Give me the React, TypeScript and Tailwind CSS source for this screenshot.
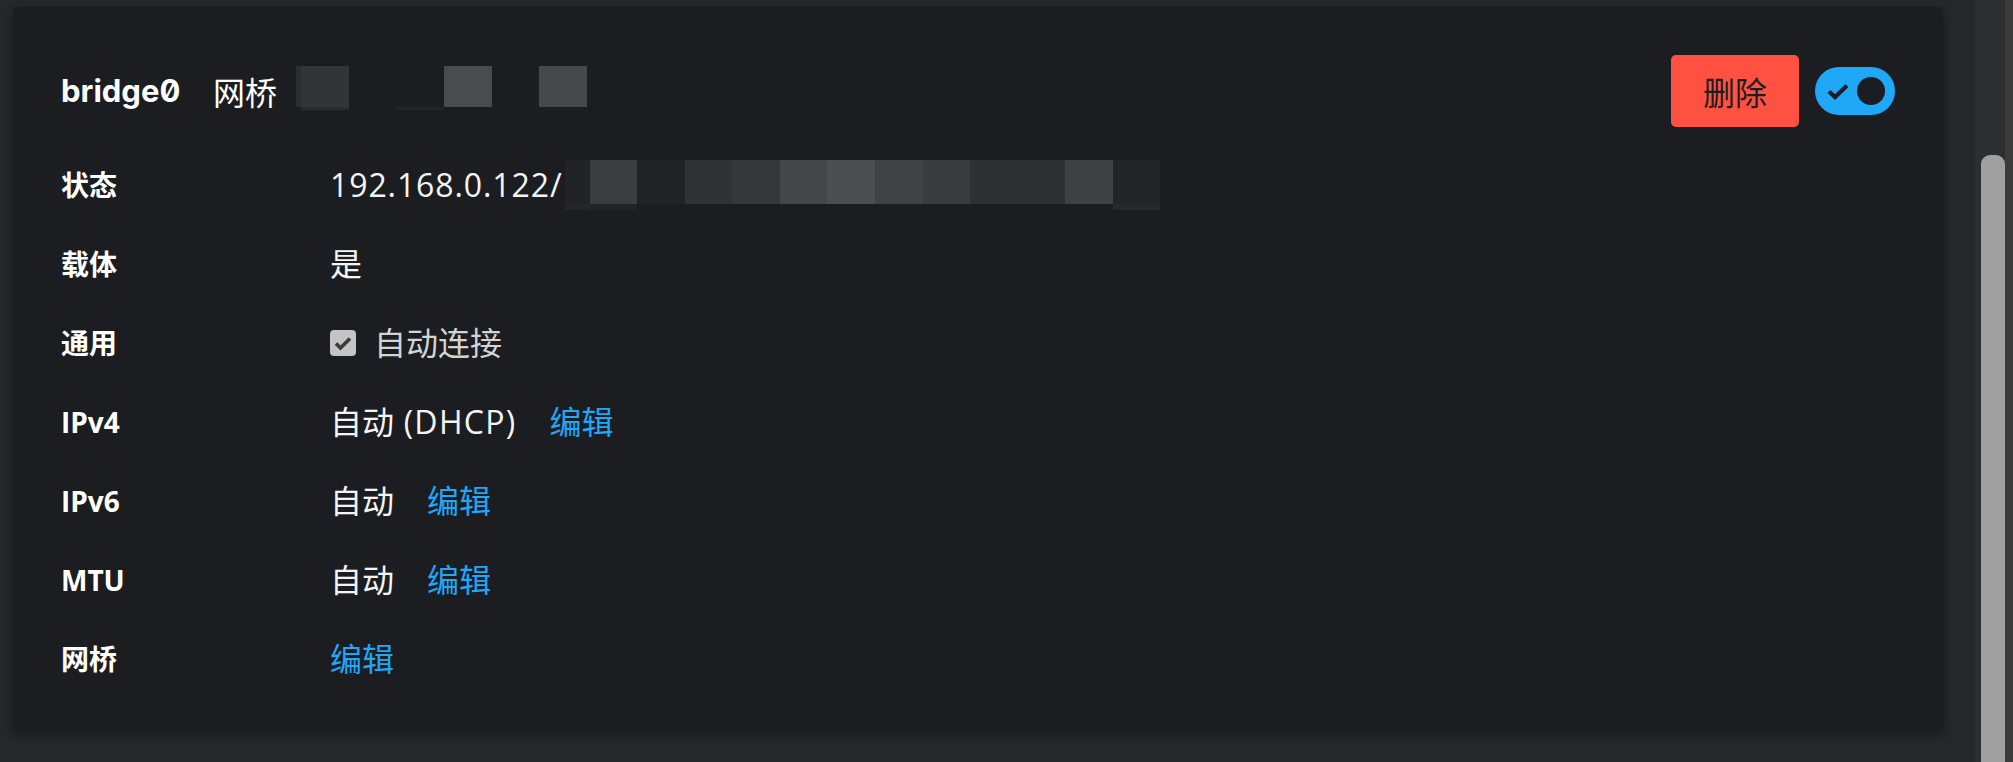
import React from "react";

const valueFont = "[font-family:'Open_Sans','Noto_Sans_CJK_SC',sans-serif]";

function HeadMosaic() {
  return (
    <svg width="291" height="44" viewBox="0 0 291 44" className="mb-[6px] ml-[19px] shrink-0">
      <rect x="0" y="0" width="5" height="41" fill="#2c2d31" />
      <rect x="5" y="0" width="48" height="41" fill="#333438" />
      <rect x="5" y="41" width="48" height="3" fill="#2a2b2f" />
      <rect x="100" y="41" width="48" height="3" fill="#232429" />
      <rect x="148" y="0" width="48" height="41" fill="#4a4b4f" />
      <rect x="243" y="0" width="48" height="41" fill="#47484c" />
    </svg>
  );
}

function StatusMosaic() {
  const cells: [number, number, string][] = [
    [0, 25, "#222327"],
    [25, 47, "#3b3c40"],
    [72, 48, "#212226"],
    [120, 47, "#313236"],
    [167, 48, "#36373b"],
    [215, 47, "#45464a"],
    [262, 48, "#4d4e52"],
    [310, 48, "#414246"],
    [358, 47, "#3a3b3f"],
    [405, 95, "#2f3034"],
    [500, 48, "#404145"],
    [548, 47, "#232428"],
  ];
  return (
    <svg width="595" height="50" viewBox="0 0 595 50" className="ml-[2px] -my-[1px] shrink-0">
      {cells.map(([x, w, c]) => (
        <rect key={x} x={x} y="0" width={w} height="44" fill={c} />
      ))}
      <rect x="0" y="44" width="25" height="6" fill="#252629" />
      <rect x="25" y="44" width="47" height="6" fill="#222327" />
      <rect x="548" y="44" width="47" height="6" fill="#27282c" />
    </svg>
  );
}

function Label({ children }: { children: React.ReactNode }) {
  return (
    <div className="text-[28px] leading-[48px] font-bold text-white [font-family:'Open_Sans','Noto_Sans_CJK_SC',sans-serif]">
      {children}
    </div>
  );
}

function Value({ children }: { children: React.ReactNode }) {
  return (
    <div className={`flex items-center text-[32px] leading-[48px] text-[#f4f4f4] ${valueFont}`}>
      {children}
    </div>
  );
}

function Edit({ className = "" }: { className?: string }) {
  return <span className={`text-[#1fa7f8] ${className}`}>编辑</span>;
}

export default function App() {
  return (
    <div className="w-[2013px] h-[762px] overflow-hidden bg-[#26292c] flex">
      <div className="flex-1 pt-[7px] pl-[13px] pr-[32px]">
        <div className="bg-[#1b1d21] rounded-[3px] shadow-[0_4px_14px_rgba(0,0,0,0.45)] pt-[48px] pb-[47px] pl-[48px] pr-[48px]">
          {/* heading */}
          <div className="flex items-center justify-between h-[72px]">
            <div className="flex items-center">
              <span className="inline-block w-[119px] whitespace-nowrap text-[31px] leading-[48px] font-bold text-white [font-family:'Inter',sans-serif] [font-feature-settings:'zero'_1]">
                bridge0
              </span>
              <span className="ml-[33px] text-[32px] leading-[48px] text-white [font-family:'Noto_Sans_CJK_SC',sans-serif]">
                网桥
              </span>
              <HeadMosaic />
            </div>
            <div className="flex items-center gap-[16px]">
              <button className="w-[128px] h-[72px] rounded-[5px] bg-[#fe5142] text-[#1b1d21] text-[32px] leading-none [font-family:'Noto_Sans_CJK_SC',sans-serif] flex items-center justify-center">
                删除
              </button>
              <div className="w-[80px] h-[48px] rounded-full bg-[#1fa7f8] flex items-center justify-between pl-[12px] pr-[10px]">
                <svg width="22" height="17" viewBox="0 0 22 17">
                  <path d="M2 8.5 L8 14 L20 2.5" fill="none" stroke="#1b1d21" strokeWidth="4.2" />
                </svg>
                <div className="w-[28px] h-[28px] rounded-full bg-[#1b1d21]" />
              </div>
            </div>
          </div>

          {/* description list */}
          <div className="mt-[34px] grid grid-cols-[269px_1fr] gap-y-[31px] items-center">
            <Label>状态</Label>
            <Value>
              <span className="tracking-[0.9px]">192.168.0.122/</span>
              <StatusMosaic />
            </Value>

            <Label>载体</Label>
            <Value>是</Value>

            <Label>通用</Label>
            <Value>
              <span className="w-[26px] h-[26px] rounded-[4px] bg-[#c4c4c4] flex items-center justify-center shrink-0">
                <svg width="18" height="15" viewBox="0 0 18 15">
                  <path d="M2 7.5 L6.5 12 L16 2.5" fill="none" stroke="#3a3a3a" strokeWidth="3.6" />
                </svg>
              </span>
              <span className="ml-[18px] text-[#d4d4d4]">自动连接</span>
            </Value>

            <Label>IPv4</Label>
            <Value>
              <span>
                自动<span className="tracking-[1.3px]"> (DHCP)</span>
              </span>
              <Edit className="ml-[33px]" />
            </Value>

            <Label>IPv6</Label>
            <Value>
              <span>自动</span>
              <Edit className="ml-[33px]" />
            </Value>

            <Label>MTU</Label>
            <Value>
              <span>自动</span>
              <Edit className="ml-[33px]" />
            </Value>

            <Label>网桥</Label>
            <Value>
              <Edit />
            </Value>
          </div>
        </div>
      </div>
      <div className="w-[38px] flex shrink-0">
        <div className="w-[30px] bg-[#2c2e30] pl-[6px] pt-[155px] flex">
          <div className="w-[18px] flex-1 rounded-t-[9px] bg-[#a0a0a0]" />
        </div>
        <div className="w-[8px] bg-[#3b3b3b]" />
      </div>
    </div>
  );
}
